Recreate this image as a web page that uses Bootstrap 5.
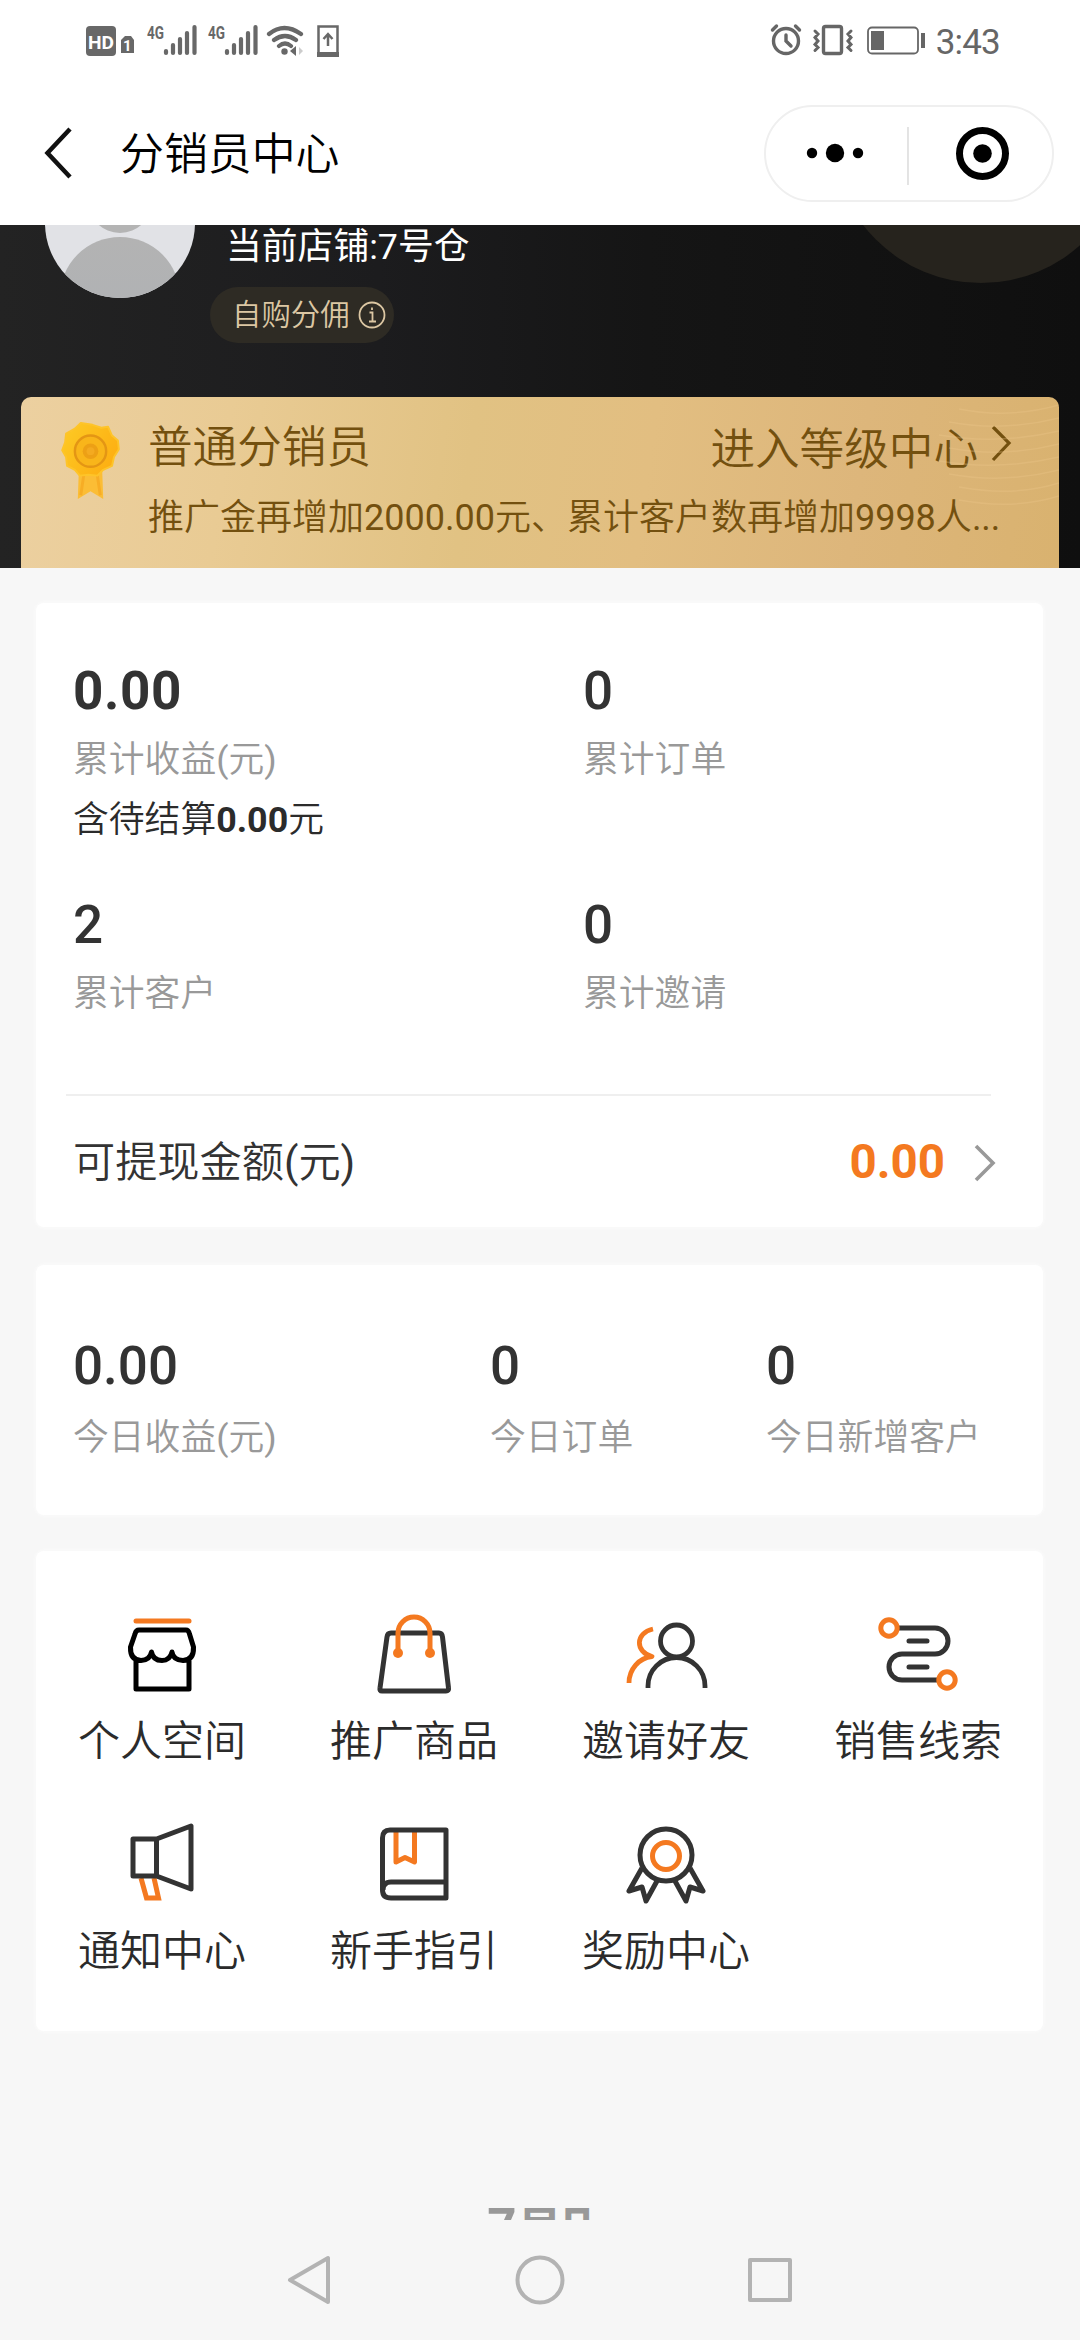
<!DOCTYPE html>
<html lang="zh-CN">
<head>
<meta charset="utf-8">
<title>分销员中心</title>
<meta name="viewport" content="width=device-width, initial-scale=1">
<link rel="stylesheet" href="https://cdn.jsdelivr.net/npm/bootstrap@5.3.0/dist/css/bootstrap.min.css">
<style>
  body{width:1080px;height:2340px;overflow:hidden;background:#f7f7f7;color:#333;font-family:Roboto,"Noto Sans CJK SC",sans-serif;font-weight:350}
  svg{display:block;flex:none}
  b{font-weight:700}
  .digits{font-weight:400}
  .statusbar{height:82px;padding:0 80px 0 84px}
  .clock{font-size:35px;line-height:82px;color:#666;font-weight:400;letter-spacing:-.8px;margin-left:10px}
  .titlebar{height:143px;padding:0 26px 0 43px}
  .page-title{font-size:43.9px;line-height:60px;color:#000;margin-left:47px;font-weight:350}
  .capsule{width:290px;height:97px;border:2px solid #efefef;border-radius:49px}
  .hero{height:343px;background:linear-gradient(90deg,#232323 0%,#1c1c1e 35%,#151515 60%,#0f0f0f 100%)}
  .halo{width:298px;height:298px;left:832px;top:-240px;background:#26231d}
  .profile{height:172px;padding-left:45px}
  .store{font-size:35.8px;line-height:44px;color:#fff;font-weight:400;margin:0 0 18px 16px}
  .pill{height:56px;width:184px;border-radius:28px;background:#2e2b24;color:#dcc7a3;font-size:29.4px;padding-left:22px;gap:8px;line-height:58px}
  .level{margin:0 21px;height:171px;border-radius:10px 10px 0 0;background:linear-gradient(98deg,#ecd0a0 0%,#e9cb94 20%,#e1c283 43%,#e2be81 60%,#ddb67b 80%,#d9b26f 100%);color:#73500f;padding-left:37px}
  .level-text{margin-left:26px;width:866px}
  .level-name{font-size:44.6px;line-height:60px;padding-top:21px}
  .level-tip{font-size:36px;line-height:50px;margin-top:16px;width:850px}
  .panel{margin:0 36px;background:#fff;border-radius:8px;box-shadow:0 0 3px 1px #fbfbfb;width:1007px}
  .panel-total{margin-top:35px;height:624px;padding:58px 0 0 37px}
  .panel-today{margin-top:38px;height:250px;padding:71px 0 0 37px}
  .panel-menu{margin-top:36px;height:480px;padding-top:59px}
  .num{font-size:53px;line-height:60px;font-weight:500}
  .num-b{font-weight:700;letter-spacing:.6px}
  .cap{font-size:35.8px;line-height:44px;color:#999;margin-top:17px;white-space:nowrap}
  .panel-today .cap{margin-top:20px}
  .sub{font-size:35.8px;line-height:44px;margin-top:16px;color:#2b2b2b}
  .paren{font-weight:400}
  .cell-l{width:510px}
  .row-a{height:234px}.row-b{height:199px}
  .rule{height:2px;width:925px;margin-left:-7px;background:#efefef}
  .cash{height:133px;padding-right:47px;font-size:42.2px}
  .amount{font-size:47.5px;font-weight:700;color:#f47920;margin-right:29px}
  .tile{width:252px;height:210px}
  .tile-name{font-size:42px;line-height:60px;margin-top:12px;color:#2b2b2b}
  .brandline{height:18px;margin-top:171px;overflow:hidden;color:#999;font-weight:700;font-size:46px;line-height:50px;letter-spacing:-8px}
  .brandline .seven{font-size:51px;letter-spacing:0;line-height:1}
  .keys{height:120px;background:#f6f6f6;padding:0 287px}
</style>
</head>
<body>
<div class="statusbar d-flex align-items-center justify-content-between bg-white">
  <svg width="260" height="40" viewBox="84 21 260 40" fill="#686868" stroke="none" font-family="Roboto">
    <rect x="86" y="26" width="30" height="30" rx="4"/>
    <text x="88" y="48.500" font-size="19" font-weight="700" fill="#fff" textLength="26" lengthAdjust="spacingAndGlyphs">HD</text>
    <path d="M125 36h6l3 4v13h-13V40z"/><text x="123" y="51" font-size="15" font-weight="700" fill="#fff">1</text>
    <text x="147" y="38.500" font-size="19" font-weight="700" textLength="17" lengthAdjust="spacingAndGlyphs">4G</text>
    <text x="208" y="38.500" font-size="19" font-weight="700" textLength="17" lengthAdjust="spacingAndGlyphs">4G</text>
    <g stroke="#686868" stroke-width="4.200" stroke-linecap="round">
      <path d="M166 51v2M173 45v8M180 39v14M187 33v20M194.500 27v26M227 51v2M234 45v8M241 39v14M248 33v20M255.500 27v26"/>
      <path fill="none" d="M269 34q15-12 32 0M274 40q11-8 22 0M279 46q6-5 12 0"/>
    </g>
    <circle cx="284.500" cy="51.500" r="3.200"/><path d="M290 51l6-5v10z"/><path d="M299 47l4 4-4 4z" fill="#ccc"/>
    <path fill="none" stroke="#686868" stroke-width="2.500" d="M318.500 26.500h19v28h-19zM328 46V34M323.500 39l4.500-5 4.500 5"/><path d="M317 52h22v5h-22z"/>
  </svg>
  <div class="d-flex align-items-center">
    <svg width="156" height="40" viewBox="769 21 156 40" fill="none" stroke="#666" stroke-width="3.400" stroke-linecap="round">
      <circle cx="785" cy="41" r="12.500"/><path d="M785 35v6l5 5M771.500 30l4-4M798.500 30l-4-4"/>
      <rect x="822.500" y="26.500" width="18" height="27" rx="2"/>
      <path stroke-width="3" d="M814 31l3 3-3 3.500 3 3.500-3 3.500 3 3-3 3M850 31l-3 3 3 3.500-3 3.500 3 3.500-3 3 3 3"/>
      <rect x="867" y="27.500" width="50" height="26" rx="4" stroke-width="1.800"/><path d="M870 31h13v19h-13z" fill="#666" stroke="none"/><path d="M920 33h4v15h-4z" fill="#666" stroke="none"/>
    </svg>
    <span class="clock pt-1">3:43</span>
  </div>
</div>

<header class="titlebar d-flex align-items-start bg-white">
  <svg style="margin-top:44px" width="30" height="54" viewBox="0 0 30 54" fill="none" stroke="#111" stroke-width="4.500"><path d="M27 3L4.500 27 27 51"/></svg>
  <h1 class="page-title mb-0" style="margin-top:43px">分销员中心</h1>
  <div class="capsule ms-auto" style="margin-top:23px">
    <svg width="286" height="93" viewBox="766 107 286 93"><circle cx="812" cy="153" r="5.200"/><circle cx="835" cy="153" r="9.200"/><circle cx="858" cy="153" r="5.200"/><path d="M908 127v58" stroke="#ddd" stroke-width="1.600"/><circle cx="982.500" cy="153.500" r="23" fill="none" stroke="#000" stroke-width="7"/><circle cx="982.500" cy="153.500" r="9.300"/></svg>
  </div>
</header>

<section class="hero position-relative overflow-hidden">
  <div class="halo rounded-circle position-absolute"></div>
  <div class="profile d-flex position-relative">
    <svg width="150" height="76" viewBox="0 0 150 76"><defs><clipPath id="face"><circle cx="75" cy="-2" r="75"/></clipPath><linearGradient id="skin" y2="1" x2="0"><stop stop-color="#b3b3b3"/><stop offset="1" stop-color="#aeb1b5"/></linearGradient></defs><g clip-path="url(#face)"><path fill="#e1e2e6" d="M0 0h150v76H0z"/><circle cx="75" cy="-24" r="32" fill="#b4b4b4"/><circle cx="75" cy="72" r="60" fill="url(#skin)"/></g></svg>
    <div style="padding-left:15px">
      <div class="store">当前店铺:7号仓</div>
      <div class="pill d-flex align-items-center"><span>自购分佣</span>
        <svg width="28" height="28" viewBox="0 0 28 28" fill="none" stroke="#dcc7a3" stroke-width="1.800"><circle cx="14" cy="14" r="12.500"/><path d="M11.500 11.500h3v9M11 20.500h7M14 6.500v2.500"/></svg>
      </div>
    </div>
  </div>
  <div class="level d-flex position-relative">
    <svg style="margin:20px 0 0 3px" width="61" height="86" viewBox="0 0 62 88"><defs><linearGradient id="gold" x2="1" y2=".6"><stop stop-color="#fdcb25"/><stop offset="1" stop-color="#fdaf12"/></linearGradient></defs><path d="M18 56l-1 28 13-8 13 8-1-28z" fill="#fbbd35"/><path d="M23 60l-3 20M37 60l3 20" stroke="#f7ad25" stroke-width="3"/><path d="M32 8l9 3 7-1 4 9 6 5 1 9-5 8-2 9-9 4-6 6-9-1-9 1-5-6-8-4-1-9-4-7 3-8 1-9 9-5 6-6z" fill="url(#gold)" stroke="#fec429" stroke-width="2" stroke-linejoin="round"/><circle cx="30" cy="35" r="16" fill="#f9b51a" stroke="#e49614" stroke-width="2.500"/><circle cx="30" cy="35" r="8" fill="#eda015"/><circle cx="30" cy="35" r="4" fill="#f4aa20"/></svg>
    <div class="level-text">
      <div class="level-name d-flex justify-content-between"><span>普通分销员</span>
        <span class="d-flex"><span style="margin-top:2px">进入等级中心</span><svg style="margin:6px 0 0 12px" width="24" height="40" viewBox="0 0 24 40" fill="none" stroke="#73500f" stroke-width="3.200"><path d="M3 3l16 16L3 36"/></svg></span>
      </div>
      <div class="level-tip text-nowrap" style="margin-top:13px">推广金再增加<span class="digits">2000.00</span>元、累计客户数再增加<span class="digits">9998</span>人<span class="digits">...</span></div>
    </div>
    <svg class="position-absolute end-0 top-0" width="130" height="130" viewBox="0 0 130 130" fill="none" stroke="#efc98d" stroke-width="1.500" opacity=".3"><path d="M30 12q50 10 100-4M20 25q55 10 110-4M10 38q60 10 120-4M20 51q55 10 110-4M10 64q60 10 120-4M20 77q55 10 110-4M30 90q55 10 100-4M30 103q55 10 100-4"/></svg>
  </div>
</section>

<main>
  <section class="panel panel-total">
    <div class="row-a d-flex">
      <div class="cell-l"><div class="num num-b">0.00</div><div class="cap">累计收益<span class="paren">(</span>元<span class="paren">)</span></div><div class="sub">含待结算<b>0.00</b>元</div></div>
      <div><div class="num">0</div><div class="cap">累计订单</div></div>
    </div>
    <div class="row-b d-flex">
      <div class="cell-l"><div class="num">2</div><div class="cap">累计客户</div></div>
      <div><div class="num">0</div><div class="cap">累计邀请</div></div>
    </div>
    <div class="rule"></div>
    <div class="cash d-flex align-items-center"><span class="me-auto">可提现金额<span class="paren">(</span>元<span class="paren">)</span></span><span class="amount">0.00</span>
      <svg width="22" height="40" viewBox="0 0 22 40" fill="none" stroke="#999" stroke-width="3.600"><path d="M2 3l17 17L2 37"/></svg></div>
  </section>

  <section class="panel panel-today d-flex">
    <div style="width:417px"><div class="num">0.00</div><div class="cap">今日收益<span class="paren">(</span>元<span class="paren">)</span></div></div>
    <div style="width:276px"><div class="num">0</div><div class="cap">今日订单</div></div>
    <div><div class="num">0</div><div class="cap">今日新增客户</div></div>
  </section>

  <section class="panel panel-menu">
    <div class="d-flex flex-wrap" style="width:1008px">
      <div class="tile d-flex flex-column align-items-center">
        <svg width="90" height="90" fill="none" stroke="#000" stroke-width="5" stroke-linejoin="round" stroke-linecap="round"><path d="M19 11H72" stroke="#f47920"/><path d="M22 20H69Q71.500 20 72.500 24L76.500 37Q77 50 66 50.500Q56 50 55 42Q53 50.500 45 50.500Q36 50.500 34.500 42Q33 50 24 50.500Q13 50 13.500 37L18 24Q19 20 22 20ZM19 51V79H72V51"/></svg>
        <div class="tile-name">个人空间</div></div>
      <div class="tile d-flex flex-column align-items-center">
        <svg width="90" height="90" fill="none" stroke="#333" stroke-width="5" stroke-linejoin="round"><path d="M22 23H70Q73 23 73.500 27L79.500 78Q80 81 77 81H13Q10.500 81 11 78L18 27Q18.500 23 22 23Z"/><path d="M29 44V23A16 16 0 0 1 61 23V44" stroke="#f47920"/><g fill="#f47920" stroke="none"><circle cx="29" cy="43" r="5"/><circle cx="61" cy="43" r="5"/></g></svg>
        <div class="tile-name">推广商品</div></div>
      <div class="tile d-flex flex-column align-items-center">
        <svg width="90" height="90" fill="none" stroke="#333" stroke-width="4.800"><circle cx="55.500" cy="31" r="16"/><path d="M27 78V76A28.500 28.500 0 0 1 84 76V78"/><path d="M32 19C14 23 14 42 31 46.500C18 48 8 59 8 73" stroke="#f47920" stroke-linejoin="round"/></svg>
        <div class="tile-name">邀请好友</div></div>
      <div class="tile d-flex flex-column align-items-center">
        <svg width="90" height="90" fill="none" stroke="#333" stroke-width="5"><path d="M25 18H62A13 13 0 0 1 62 44H29A13 13 0 0 0 29 70H65"/><path d="M36 31H54M36 57H54" stroke-linecap="round"/><g stroke="#f47920"><circle cx="16" cy="18" r="8.200"/><circle cx="74" cy="70" r="8.200"/></g></svg>
        <div class="tile-name">销售线索</div></div>
      <div class="tile d-flex flex-column align-items-center">
        <svg width="90" height="90" fill="none" stroke="#333" stroke-width="5" stroke-linejoin="round"><path d="M24 58L29.500 78H41.500L37 58" stroke="#f47920" stroke-linejoin="miter"/><path d="M16 19H39.500V56H16ZM39.500 19L74 6V69L39.500 56"/></svg>
        <div class="tile-name">通知中心</div></div>
      <div class="tile d-flex flex-column align-items-center">
        <svg width="90" height="90" fill="none" stroke="#333" stroke-width="5" stroke-linejoin="round"><path d="M27 12V42L36 37.500L45.500 42V12" stroke="#f47920"/><path d="M77 10H21Q13.500 10 13.500 18V70Q13.500 78 22 78H77ZM77 62H22Q14 62 14 70"/></svg>
        <div class="tile-name">新手指引</div></div>
      <div class="tile d-flex flex-column align-items-center">
        <svg width="90" height="90" fill="none" stroke="#333" stroke-width="5" stroke-linejoin="round"><circle cx="45" cy="35" r="26"/><circle cx="45" cy="36" r="13.500" stroke="#f47920"/><path d="M21 48L8 71L21 67L25 81L36 61M69 48L82 71L69 67L65 81L54 61"/></svg>
        <div class="tile-name">奖励中心</div></div>
    </div>
  </section>
</main>

<div class="brandline text-center"><span class="seven">7</span>号几</div>
<nav class="keys d-flex align-items-center justify-content-between">
  <svg width="46" height="50" viewBox="0 0 46 50" fill="none" stroke="#b3b3b3" stroke-width="4" stroke-linejoin="round"><path d="M41 3V47L3 25Z"/></svg>
  <svg width="50" height="50" viewBox="0 0 50 50" fill="none" stroke="#b3b3b3" stroke-width="4"><circle cx="25" cy="25" r="22.500"/></svg>
  <svg width="46" height="46" viewBox="0 0 46 46" fill="none" stroke="#b3b3b3" stroke-width="4" stroke-linejoin="round"><path d="M3 3H43V43H3Z"/></svg>
</nav>
<script src="https://cdn.jsdelivr.net/npm/bootstrap@5.3.0/dist/js/bootstrap.bundle.min.js"></script>
</body>
</html>
